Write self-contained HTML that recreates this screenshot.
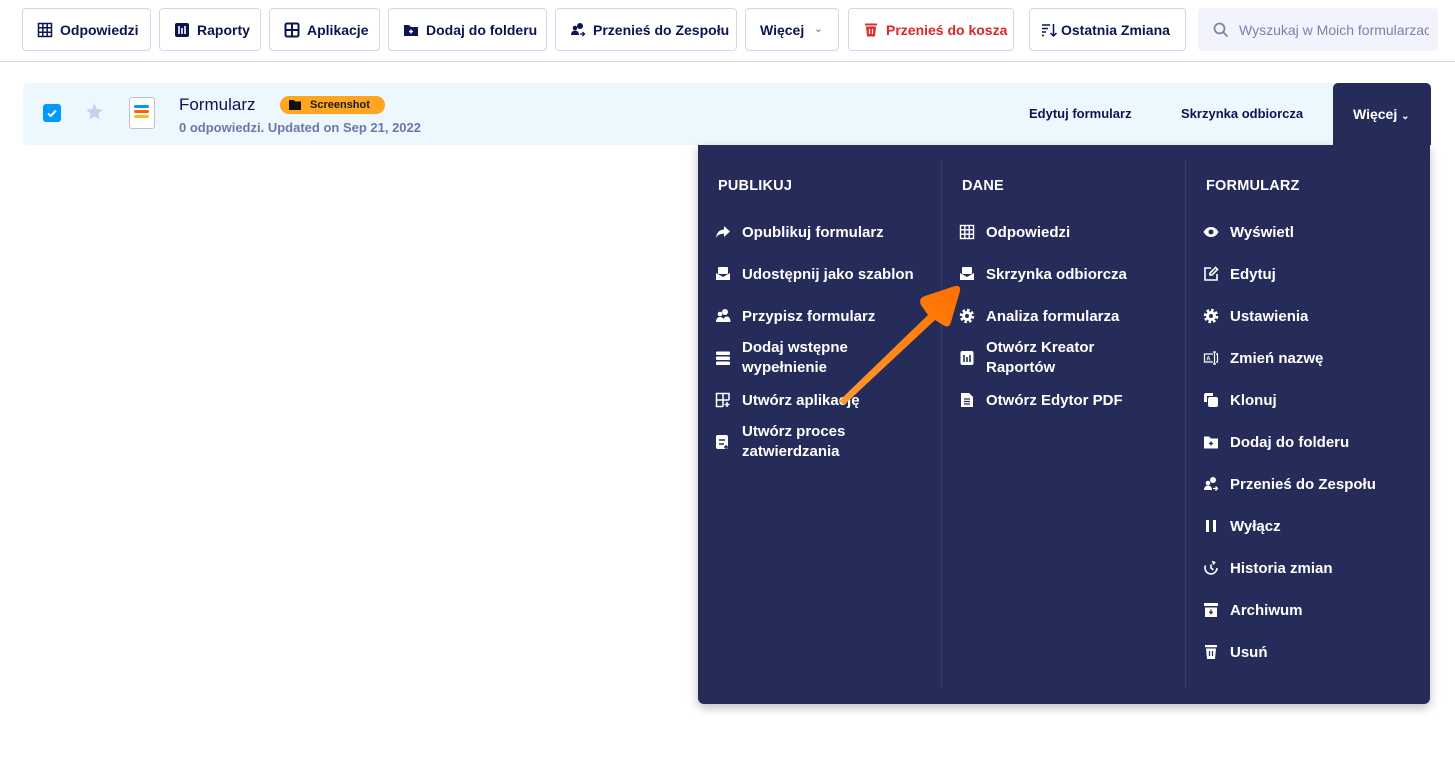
<!DOCTYPE html>
<html><head><meta charset="utf-8"><style>
*{box-sizing:border-box;margin:0;padding:0}
body{width:1455px;height:772px;background:#fff;font-family:"Liberation Sans",sans-serif;position:relative;overflow:hidden;color:#0a1551}
.b{position:absolute;top:8px;height:43px;border:1px solid #d3d6e6;border-radius:4px;display:flex;align-items:center;padding-left:14px;font-size:14px;font-weight:700;color:#0a1551;gap:7px;background:#fff}
.b svg{width:16px;height:16px;flex:none}
.hr{position:absolute;top:61px;left:0;width:1455px;height:1px;background:#d3d6e6}
.row{position:absolute;left:23px;top:83px;width:1408px;height:62px;background:#edf8fe;border-radius:5px}
.menu{position:absolute;left:698px;top:145px;width:732px;height:559px;background:#252c5a;border-radius:0 0 6px 6px;box-shadow:0 4px 10px rgba(0,0,0,.25);color:#fff}
.dv{position:absolute;top:15px;width:1px;height:528px;background:#353d6b}
.h{position:absolute;top:33px;font-size:14.5px;font-weight:700;letter-spacing:.2px}
.it{position:absolute;font-size:15px;font-weight:700;line-height:20px;display:flex;align-items:center;height:0}
.it svg{position:absolute;left:0;top:-7px;width:16px;height:16px}
.it span{position:absolute;left:27px;top:-8px;white-space:nowrap}
</style></head><body>

<div class="b" style="left:22px;width:129px"><svg viewBox="0 0 16 16" fill="none" stroke="#0a1551" stroke-width="1.5"><rect x="1.5" y="1.5" width="13" height="13"/><path d="M1.5 5.8h13M1.5 10.2h13M5.8 1.5v13M10.2 1.5v13"/></svg>Odpowiedzi</div>
<div class="b" style="left:159px;width:102px"><svg viewBox="0 0 16 16"><rect x="1" y="1" width="14" height="14" rx="2" fill="#0a1551"/><path d="M5 4v8M8 6v6M11 4v8" stroke="#fff" stroke-width="1.6"/></svg>Raporty</div>
<div class="b" style="left:269px;width:111px"><svg viewBox="0 0 16 16" fill="none" stroke="#0a1551" stroke-width="2"><rect x="1.5" y="1.5" width="13" height="13" rx="1.5"/><path d="M8 1.5v13M1.5 8h13"/></svg>Aplikacje</div>
<div class="b" style="left:388px;width:159px"><svg viewBox="0 0 16 16"><path d="M1 3h5l2 2h7v9H1z" fill="#0a1551"/><path d="M8 7.5v4M6 9.5h4" stroke="#fff" stroke-width="1.4"/></svg>Dodaj do folderu</div>
<div class="b" style="left:555px;width:182px"><svg viewBox="0 0 16 16" fill="#0a1551"><circle cx="10" cy="4" r="3"/><circle cx="5" cy="6" r="2.3"/><path d="M1 13c0-3 2-4.5 4-4.5s4 1.5 4 4.5z"/><path d="M10 12h4M12.5 10l2 2-2 2" stroke="#0a1551" fill="none" stroke-width="1.3"/></svg>Przenieś do Zespołu</div>
<div class="b" style="left:745px;width:94px;gap:10px">Więcej <span style="color:#8a90b0;font-size:10px">&#8964;</span></div>
<div class="b" style="left:848px;width:166px;color:#dc2626"><svg viewBox="0 0 16 16" fill="#e02e2e"><rect x="2" y="1.5" width="12" height="2" rx=".5"/><path d="M3 4.5h10l-1 10H4z"/><path d="M6.5 7v5M9.5 7v5" stroke="#fff" stroke-width="1.2"/></svg>Przenieś do kosza</div>
<div class="b" style="left:1029px;width:157px;padding-left:11px;gap:4px"><svg viewBox="0 0 16 16" fill="none" stroke="#0a1551" stroke-width="1.5"><path d="M1 3h8M1 6.5h6M1 10h4M1 13.5h2M12.5 2v12M9.5 11l3 3 3-3"/></svg>Ostatnia Zmiana</div>
<div class="b" style="left:1198px;width:240px;background:#f3f3fe;border-color:#f3f3fe;font-weight:400;color:#7c80a8;gap:10px"><svg viewBox="0 0 16 16" fill="none" stroke="#7c80a8" stroke-width="1.7"><circle cx="6.5" cy="6.5" r="5"/><path d="M10.5 10.5l4 4"/></svg><span style="white-space:nowrap;overflow:hidden;width:190px">Wyszukaj w Moich formularzach</span></div>
<div class="hr"></div>

<div class="row">
 <div style="position:absolute;left:20px;top:21px;width:18px;height:18px;background:#0099ff;border-radius:3px"><svg viewBox="0 0 18 18" width="18" height="18"><path d="M5 9.5l2.7 2.5L13 6.5" stroke="#fff" stroke-width="2" fill="none"/></svg></div>
 <svg style="position:absolute;left:61px;top:19px" width="21" height="20" viewBox="0 0 24 24"><path d="M12 2l2.9 6.6 7.1.6-5.4 4.7 1.6 7L12 17.3 5.8 20.9l1.6-7L2 9.2l7.1-.6z" fill="#c9cdef"/></svg>
 <div style="position:absolute;left:106px;top:14px;width:26px;height:32px;border:1.5px solid #b9c0e0;border-radius:3px;background:#fff">
  <div style="position:absolute;left:4px;top:7px;width:15px;height:3px;background:#0099ff;border-radius:2px"></div>
  <div style="position:absolute;left:4px;top:12px;width:15px;height:3px;background:#ff6100;border-radius:2px"></div>
  <div style="position:absolute;left:4px;top:17px;width:15px;height:3px;background:#ffb629;border-radius:2px"></div>
 </div>
 <div style="position:absolute;left:156px;top:12px;font-size:17px;color:#0a1551">Formularz</div>
 <div style="position:absolute;left:257px;top:13px;height:18px;width:105px;background:#ffa51f;border-radius:9px;font-size:11px;font-weight:700;color:#1a1a1a;display:flex;align-items:center;padding-left:9px;gap:9px"><svg width="12" height="10" viewBox="0 0 12 10"><path d="M0 0h5l1 1.5h6V10H0z" fill="#111"/></svg>Screenshot</div>
 <div style="position:absolute;left:156px;top:37px;font-size:13px;font-weight:700;color:#6f76a7">0 odpowiedzi. Updated on Sep 21, 2022</div>
 <div style="position:absolute;left:1006px;top:23px;font-size:13px;font-weight:700;color:#0a1551">Edytuj formularz</div>
 <div style="position:absolute;left:1158px;top:23px;font-size:13px;font-weight:700;color:#0a1551">Skrzynka odbiorcza</div>
 <div style="position:absolute;left:1310px;top:0;width:98px;height:62px;background:#252c5a;border-radius:5px 5px 0 0;color:#fff;font-size:14px;font-weight:700;padding:23px 0 0 20px">Więcej <span style="font-size:10px">&#8964;</span></div>
</div>

<div class="menu">
 <div class="dv" style="left:243px"></div><div class="dv" style="left:487px"></div>
 <div class="h" style="left:20px">PUBLIKUJ</div>
 <div class="h" style="left:264px">DANE</div>
 <div class="h" style="left:508px">FORMULARZ</div>

 <div class="it" style="left:17px;top:86px"><svg viewBox="0 0 16 16" fill="#fff"><path d="M9 2l6 5.5L9 13V9.8C5 9.8 2.5 11 1 14c.5-5 3-8 8-8.6z"/></svg><span>Opublikuj formularz</span></div>
 <div class="it" style="left:17px;top:128px"><svg viewBox="0 0 16 16" fill="#fff"><rect x="3" y="1" width="10" height="7" rx="1"/><path d="M1 7l7 4 7-4v7H1z"/></svg><span>Udostępnij jako szablon</span></div>
 <div class="it" style="left:17px;top:170px"><svg viewBox="0 0 16 16" fill="#fff"><circle cx="10" cy="4" r="3"/><circle cx="5" cy="6" r="2.3"/><path d="M1 14c0-3.5 2-5 4-5s3 1 3.5 2c.5-1.5 2-2.5 3.5-2.5 2 0 3.5 1.8 3.5 5.5z"/></svg><span>Przypisz formularz</span></div>
 <div class="it" style="left:17px;top:212px"><svg viewBox="0 0 16 16" fill="#fff"><rect x="1" y="1.5" width="14" height="3.5" rx="1"/><rect x="1" y="6.5" width="14" height="3.5" rx="1"/><rect x="1" y="11.5" width="14" height="3.5" rx="1"/></svg><span style="top:-19px">Dodaj wstępne<br>wypełnienie</span></div>
 <div class="it" style="left:17px;top:254px"><svg viewBox="0 0 16 16" fill="none" stroke="#fff" stroke-width="1.5"><path d="M14 8V1.5H1.5v13H8M1.5 8h12.5M8 1.5v13M12 10v5M9.5 12.5h5"/></svg><span>Utwórz aplikację</span></div>
 <div class="it" style="left:17px;top:296px"><svg viewBox="0 0 16 16" fill="#fff"><rect x="1" y="1" width="12" height="14" rx="2"/><path d="M4 6h6M4 10h5M11 11v4M9 13h4" stroke="#252c5a" stroke-width="1.5"/></svg><span style="top:-19px">Utwórz proces<br>zatwierdzania</span></div>

 <div class="it" style="left:261px;top:86px"><svg viewBox="0 0 16 16" fill="none" stroke="#fff" stroke-width="1.4"><rect x="1.5" y="1.5" width="13" height="13"/><path d="M1.5 5.8h13M1.5 10.2h13M5.8 1.5v13M10.2 1.5v13"/></svg><span>Odpowiedzi</span></div>
 <div class="it" style="left:261px;top:128px"><svg viewBox="0 0 16 16" fill="#fff"><rect x="3" y="1" width="10" height="7" rx="1"/><path d="M1 7l7 4 7-4v7H1z"/></svg><span>Skrzynka odbiorcza</span></div>
 <div class="it" style="left:261px;top:170px"><svg viewBox="0 0 16 16"><circle cx="8" cy="8" r="5.5" fill="none" stroke="#fff" stroke-width="3.5" stroke-dasharray="2.4 1.9"/><circle cx="8" cy="8" r="5" fill="#fff"/><circle cx="8" cy="8" r="2" fill="#252c5a"/></svg><span>Analiza formularza</span></div>
 <div class="it" style="left:261px;top:212px"><svg viewBox="0 0 16 16"><rect x="1.5" y="1" width="13" height="14" rx="2" fill="#fff"/><path d="M5 5v7M8 7v5M11 5v7" stroke="#252c5a" stroke-width="1.6"/></svg><span style="top:-19px">Otwórz Kreator<br>Raportów</span></div>
 <div class="it" style="left:261px;top:254px"><svg viewBox="0 0 16 16"><path d="M2 1h8l4 4v10H2z" fill="#fff"/><path d="M5 7h6M5 9.5h6M5 12h6" stroke="#252c5a" stroke-width="1.2"/></svg><span>Otwórz Edytor PDF</span></div>

 <div class="it" style="left:505px;top:86px"><svg viewBox="0 0 16 16"><path d="M0.5 8C2.5 4.5 5 3 8 3s5.5 1.5 7.5 5c-2 3.5-4.5 5-7.5 5S2.5 11.5.5 8z" fill="#fff"/><circle cx="8" cy="8" r="2.5" fill="#252c5a"/></svg><span>Wyświetl</span></div>
 <div class="it" style="left:505px;top:128px"><svg viewBox="0 0 16 16" fill="none" stroke="#fff" stroke-width="1.6"><path d="M8 2H2v12h12V8"/><path d="M12.5 1.5l2 2L9 9H7V7z"/></svg><span>Edytuj</span></div>
 <div class="it" style="left:505px;top:170px"><svg viewBox="0 0 16 16"><circle cx="8" cy="8" r="5.5" fill="none" stroke="#fff" stroke-width="3.5" stroke-dasharray="2.4 1.9"/><circle cx="8" cy="8" r="5" fill="#fff"/><circle cx="8" cy="8" r="2" fill="#252c5a"/></svg><span>Ustawienia</span></div>
 <div class="it" style="left:505px;top:212px"><svg viewBox="0 0 16 16" fill="none" stroke="#fff" stroke-width="1.2"><path d="M10 4H1.5v8H10M13 4h1.5v8H13M11.5 2v12M10 2h3M10 14h3"/><text x="3.2" y="10.5" font-size="6" fill="#fff" stroke="none" font-family="Liberation Sans">A</text></svg><span>Zmień nazwę</span></div>
 <div class="it" style="left:505px;top:254px"><svg viewBox="0 0 16 16" fill="#fff"><path d="M1 3a2 2 0 012-2h7v3H4v6H1z"/><rect x="5" y="5" width="10" height="10" rx="2"/></svg><span>Klonuj</span></div>
 <div class="it" style="left:505px;top:296px"><svg viewBox="0 0 16 16"><path d="M1 2.5h5l2 2h7v10H1z" fill="#fff"/><path d="M8 7.5v4M6 9.5h4" stroke="#252c5a" stroke-width="1.4"/></svg><span>Dodaj do folderu</span></div>
 <div class="it" style="left:505px;top:338px"><svg viewBox="0 0 16 16" fill="#fff"><circle cx="10" cy="4" r="3"/><circle cx="5" cy="7" r="2.3"/><path d="M1 14c0-3 2-4.5 4-4.5s4 1.5 4 4.5z"/><path d="M10 12.5h4.5M12.5 10.5l2 2-2 2" stroke="#fff" fill="none" stroke-width="1.3"/></svg><span>Przenieś do Zespołu</span></div>
 <div class="it" style="left:505px;top:380px"><svg viewBox="0 0 16 16" fill="#fff"><rect x="3" y="2" width="3" height="12"/><rect x="10" y="2" width="3" height="12"/></svg><span>Wyłącz</span></div>
 <div class="it" style="left:505px;top:422px"><svg viewBox="0 0 16 16" fill="none" stroke="#fff" stroke-width="1.6"><path d="M14 8A6 6 0 112.5 5.5M8 4.5V8l2.5 2"/><path d="M9 1.5l2.5 1-1.5 2" /></svg><span>Historia zmian</span></div>
 <div class="it" style="left:505px;top:464px"><svg viewBox="0 0 16 16" fill="#fff"><rect x="1" y="1" width="14" height="3"/><path d="M2 5.5h12V15H2z"/><path d="M8 7.5v4M6.3 9.8L8 11.5l1.7-1.7" stroke="#252c5a" stroke-width="1.3" fill="none"/></svg><span>Archiwum</span></div>
 <div class="it" style="left:505px;top:506px"><svg viewBox="0 0 16 16" fill="#fff"><rect x="2" y="1" width="12" height="2.3" rx=".5"/><path d="M3 4.5h10l-1 10.5H4z"/><path d="M6.5 7v5M9.5 7v5" stroke="#252c5a" stroke-width="1.2"/></svg><span>Usuń</span></div>
</div>

<svg style="position:absolute;left:0;top:0" width="1455" height="772">
 <defs><linearGradient id="g" x1="840" y1="400" x2="958" y2="285" gradientUnits="userSpaceOnUse"><stop offset="0" stop-color="#ff9a2e"/><stop offset="1" stop-color="#ff6f00"/></linearGradient></defs>
 <path d="M839 401 L928 315 L921 305 Q918 298 925 296 L955 286 Q961 285 960 291 L951 322 Q949 329 943 325 L935 320 L844 405 Z" fill="url(#g)"/>
</svg>
</body></html>
